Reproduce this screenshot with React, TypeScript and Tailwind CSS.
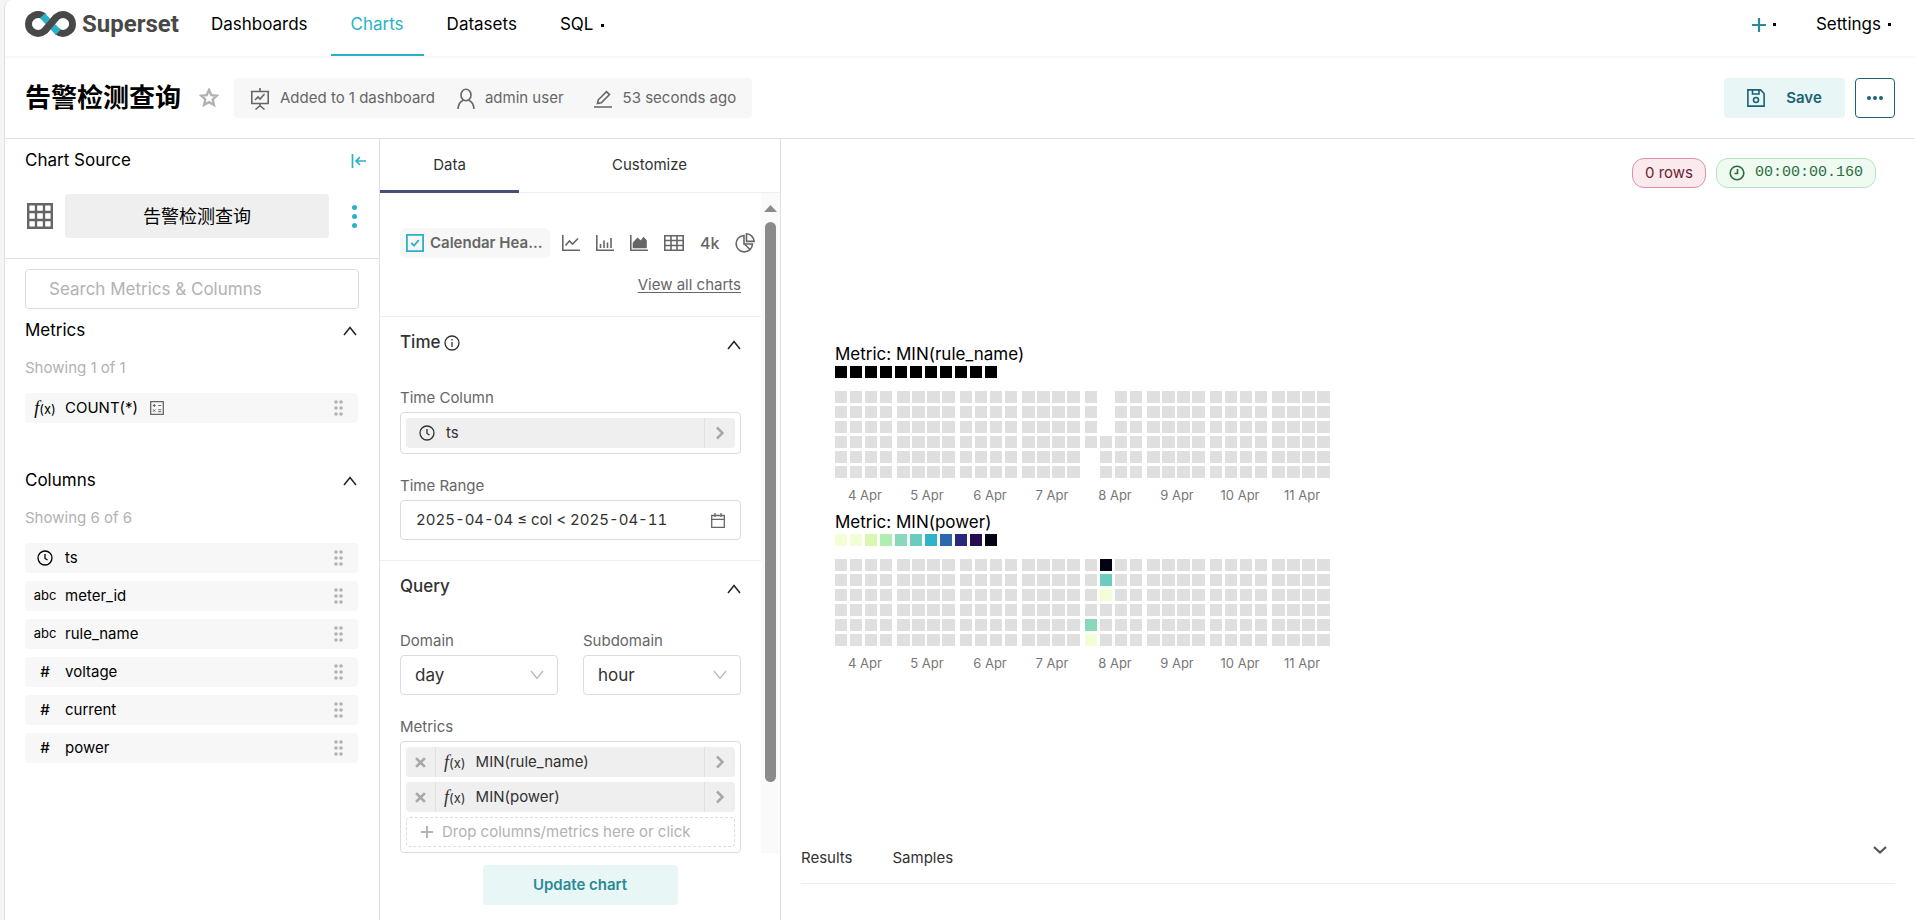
import React, {ReactNode, useState} from "react";

type IconProps = {className?: string};

const Logo = () => (
	<svg className="w-[51px] h-[26px]" viewBox="0 0 51 26" fill="none" strokeWidth="7">
		<path d="M31.500 20C38.500 25.500 47.500 20.500 47.500 13S38.500 0.500 31.500 6L19.500 20C12.500 25.500 3.500 20.500 3.500 13S12.500 0.500 19 5.600" stroke="#484848"/>
		<path d="M17.500 4.600L23.500 11.200M27.500 15.500L33.300 21.300" stroke="#2bb1c7"/>
		<path d="M19.500 20L31.500 6" stroke="#484848"/>
	</svg>
);

const Star = () => (
	<svg className="w-5 h-5" viewBox="0 0 20 20" fill="none" stroke="#b2b2b2" strokeWidth="2.400">
		<path d="M10 2l2.300 5.100 5.500.600-4.100 3.700 1.200 5.500L10 14.100l-4.900 2.800 1.200-5.500L2.200 7.700l5.500-.6z"/>
	</svg>
);

const Board = () => (
	<svg className="w-5 h-6" viewBox="0 0 20 24" fill="none" stroke="#666" strokeWidth="1.600">
		<path d="M.8 4.500h18.400M1.800 4.500v12h16.400v-12M10 1v3.500M10 16.500v3M5.500 22.500L10 18.700l4.500 3.800M5 13l3-3 2 2 4.500-5"/>
	</svg>
);

const Person = () => (
	<svg className="w-[18px] h-[22px]" viewBox="0 0 18 22" fill="none" stroke="#666" strokeWidth="1.6">
		<ellipse cx="9" cy="7" rx="5" ry="5.800"/>
		<path d="M1 21c.3-4.500 2-7.500 5.200-8.800M17 21c-.3-4.500-2-7.500-5.200-8.800"/>
	</svg>
);

const Pencil = () => (
	<svg className="w-[18px] h-[18px]" viewBox="0 0 18 18" fill="none" stroke="#666" strokeWidth="1.600">
		<path d="M0 17h18M3.500 13.500l.8-3.700L12.500 1.600l3 3-8.200 8.200z"/>
	</svg>
);

const Disk = () => (
	<svg className="w-[18px] h-[18px]" viewBox="0 0 18 18" fill="none" stroke="#1a6374" strokeWidth="1.6">
		<path d="M.9.900h12.600l3.600 3.600v12.600H.9zM5.500 1v4h6.500V1"/>
		<circle cx="9" cy="11" r="2.500"/>
	</svg>
);

const Collapse = () => (
	<svg className="w-4 h-4" viewBox="0 0 16 16" fill="none" stroke="#2bb1c7" strokeWidth="1.700">
		<path d="M1.500 1v14M15 8H5M9 4L5 8l4 4"/>
	</svg>
);

const TableIcon = () => (
	<svg className="w-[26px] h-[26px]" viewBox="0 0 26 26" fill="none" stroke="#666" strokeWidth="2.400">
		<path d="M1.200 1.200h23.600v23.600H1.200zM9 1v24M17 1v24M1 9h24M1 17h24"/>
	</svg>
);

const Clock = ({className}: IconProps) => (
	<svg className={className} viewBox="0 0 16 16" fill="none" stroke="currentColor" strokeWidth="1.300">
		<circle cx="8" cy="8" r="7"/>
		<path d="M8 4v4.500l2.500 1.500"/>
	</svg>
);

const Stopwatch = () => (
	<svg className="w-4 h-4" viewBox="0 0 16 16" fill="none" stroke="currentColor" strokeWidth="1.600">
		<circle cx="8" cy="8" r="6.800"/>
		<path d="M8.500 4v4.500H5.500"/>
	</svg>
);

const Info = () => (
	<svg className="w-4 h-4" viewBox="0 0 16 16" fill="none" stroke="#323232" strokeWidth="1.300">
		<circle cx="8" cy="8" r="7"/>
		<path d="M8 7v5M8 4v1.500"/>
	</svg>
);

const CaretUp = () => (
	<svg className="w-[14px] h-[10px]" viewBox="0 0 14 10" fill="none" stroke="#222" strokeWidth="1.5">
		<path d="M1 9l6-7.500L13 9"/>
	</svg>
);

const CaretDown = () => (
	<svg className="w-[14px] h-[10px]" viewBox="0 0 14 10" fill="none" stroke="#b8b8b8" strokeWidth="1.300">
		<path d="M1 1l6 7.500L13 1"/>
	</svg>
);

const Grip = () => (
	<svg className="w-[10px] h-4" viewBox="0 0 10 16" fill="#b2b2b2">
		{[2, 8, 14].map(y => <g key={y}><circle cx="2" cy={y} r="1.800"/><circle cx="7" cy={y} r="1.800"/></g>)}
	</svg>
);

const Calculator = () => (
	<svg className="w-[14px] h-[14px]" viewBox="0 0 14 14" fill="none" stroke="#666">
		<path d="M.7.700h12.600v12.600H.7z" strokeWidth="1.300"/>
		<path d="M2.800 4.500h3M4.300 3v3M8.200 4.500h3M8.200 8.700h3M8.200 10.700h3M3 8.300l2.500 2.500M5.500 8.300L3 10.800"/>
	</svg>
);

const Calendar = () => (
	<svg className="w-[14px] h-[15px]" viewBox="0 0 14 15" fill="none" stroke="#666" strokeWidth="1.300">
		<path d="M.7 2.500h12.600v11.800H.7zM.7 6.300h12.600M4 0v4M10 0v4"/>
	</svg>
);

const ArrowRight = () => (
	<svg className="w-2 h-3.5" viewBox="0 0 8 14" fill="none" stroke="#a8a8a8" strokeWidth="2.500">
		<path d="M1 1.500L6.500 7 1 12.500"/>
	</svg>
);

const Cross = () => (
	<svg className="w-[11px] h-[11px]" viewBox="0 0 10 10" fill="none" stroke="#a8a8a8" strokeWidth="2.400">
		<path d="M1 1l8 8M9 1L1 9"/>
	</svg>
);

const Plus = ({className}: IconProps) => (
	<svg className={className} viewBox="0 0 14 14" fill="none" stroke="currentColor" strokeWidth="2.200">
		<path d="M7 0v14M0 7h14"/>
	</svg>
);

const LineIcon = () => (
	<svg className="w-[18px] h-4" viewBox="0 0 18 16" fill="none" stroke="#666" strokeWidth="1.600">
		<path d="M.8 0v15.200H18M3.500 10.500l4-4.500 3 3L16 3.500"/>
	</svg>
);

const BarIcon = () => (
	<svg className="w-[18px] h-4" viewBox="0 0 18 16" fill="none" stroke="#666" strokeWidth="1.600">
		<path d="M.8 0v15.200H18M4.500 9v4M8 5.500V13M11.500 7.500V13M15 3v10"/>
	</svg>
);

const AreaIcon = () => (
	<svg className="w-[18px] h-4" viewBox="0 0 18 16" fill="none" stroke="#666" strokeWidth="1.600">
		<path d="M.8 0v15.200H18"/>
		<path d="M3.500 12.500V8l4-4.500 3.500 3L13.500 3 16 5.500v7z" fill="#666"/>
	</svg>
);

const GridIcon = () => (
	<svg className="w-5 h-4" viewBox="0 0 20 16" fill="none" stroke="#666" strokeWidth="1.600">
		<path d="M.8.800h18.400v14.400H.8zM7 1v14M13 1v14M1 5.500h18M1 10.500h18"/>
	</svg>
);

const PieIcon = () => (
	<svg className="w-5 h-5" viewBox="0 0 20 20" fill="none" stroke="#666" strokeWidth="1.600">
		<path d="M9 2.500a8.200 8.200 0 1 0 8.500 8.500H9z"/>
		<path d="M11.500.800a8 8 0 0 1 7.600 7.600h-7.600zM9.500 11l5.500 5.500"/>
	</svg>
);

const Checked = () => (
	<svg className="w-[18px] h-[18px] shrink-0" viewBox="0 0 18 18" fill="none" stroke="#2bb1c7" strokeWidth="1.800">
		<path d="M.9.900h16.200v16.200H.9z"/>
		<path d="M5.300 8.800l2.700 2.900L12.800 6"/>
	</svg>
);

const Fx = () => (
	<span className="text-[13px] whitespace-nowrap"><i className="font-['Liberation_Serif',serif] text-[18px]">f</i>(x)</span>
);

const Dot = () => <span className="w-[3px] h-[3px] bg-black"/>;

const NavLink = ({children, active}: {children: ReactNode; active?: boolean}) => (
	<a
		href="#"
		className={active
			? "h-14 pb-[14px] px-5 flex items-center text-[#2bb1c7] border-b-2 border-[#2bb1c7] pt-[10px]"
			: "h-14 pb-[14px] px-5 flex items-center gap-2 pt-2"}
	>
		{children}
	</a>
);

type Field = {name: string; type: "time" | "string" | "number" | "metric"};

const columns: Field[] = [
	{name: "ts", type: "time"},
	{name: "meter_id", type: "string"},
	{name: "rule_name", type: "string"},
	{name: "voltage", type: "number"},
	{name: "current", type: "number"},
	{name: "power", type: "number"},
];

const FieldRow = ({field}: {field: Field}) => (
	<li className="h-[30px] flex items-center bg-[#f7f7f7] rounded pr-[14px]">
		<span className="w-10 flex items-center justify-center shrink-0">
			{field.type === "metric" && <Fx/>}
			{field.type === "time" && <Clock className="w-4 h-4"/>}
			{field.type === "string" && <span className="text-[13px]">abc</span>}
			{field.type === "number" && <b className="text-[15px] font-medium">#</b>}
		</span>
		<span className="flex-1 flex items-center gap-3 text-[15px]">
			{field.name}
			{field.type === "metric" && <Calculator/>}
		</span>
		<Grip/>
	</li>
);

const FieldGroup = ({title, fields}: {title: string; fields: Field[]}) => (
	<section>
		<h3 className="h-[22px] pr-[2px] flex items-center justify-between text-[17px]">
			{title}
			<button type="button" aria-label={`Collapse ${title}`}><CaretUp/></button>
		</h3>
		<p className="mt-[14px] h-6 leading-6 text-[15px] text-[#b2b2b2]">Showing {fields.length} of {fields.length}</p>
		<ul className="mt-[13px] mr-px flex flex-col gap-2">
			{fields.map(field => <FieldRow key={field.name} field={field}/>)}
		</ul>
	</section>
);

const SectionTitle = ({children}: {children: ReactNode}) => (
	<h3 className="h-[22px] flex items-center justify-between text-[17px] font-medium text-[#323232]">
		<span className="flex items-center gap-1">{children}</span>
		<button type="button" aria-label="Collapse section" className="pt-1"><CaretUp/></button>
	</h3>
);

const MetricPill = ({name}: {name: string}) => (
	<div className="h-[30px] flex items-stretch bg-[#efefef] rounded">
		<button type="button" aria-label={`Remove ${name}`} className="w-[30px] flex items-center justify-center border-r border-[#e0e0e0]"><Cross/></button>
		<span className="flex-1 flex items-center gap-[10px] pl-2 text-[15px] text-[#323232]"><Fx/>{name}</span>
		<button type="button" aria-label={`Edit ${name}`} className="w-[31px] flex items-center justify-center border-l border-[#e0e0e0]"><ArrowRight/></button>
	</div>
);

const days = ["4 Apr", "5 Apr", "6 Apr", "7 Apr", "8 Apr", "9 Apr", "10 Apr", "11 Apr"];
const black = Array<string>(11).fill("#000");
const ramp = ["#f2fed6", "#f2fed6", "#d9f7ae", "#aeeeb3", "#8ad8bc", "#6accbd", "#2fb3c8", "#2a69aa", "#2b277f", "#240c51", "#030212"];

type HeatmapProps = {metric: string; legend: string[]; cells: Record<string, string>};

// cells is keyed by "day-column-row", everything else is an empty hour
const Heatmap = ({metric, legend, cells}: HeatmapProps) => (
	<figure>
		<figcaption className="h-6 leading-6 text-[17px]">Metric: {metric}</figcaption>
		<svg className="w-[496px] h-[140px]" viewBox="0 0 496 140" shapeRendering="crispEdges">
			{legend.map((color, i) => <rect key={i} x={i * 15} y="0" width="12" height="12" fill={color}/>)}
			{days.map((day, d) => {
				const left = Math.floor(d * 62.5);
				return (
					<g key={day}>
						{Array.from({length: 24}, (_, hour) => {
							const col = Math.floor(hour / 6);
							const row = hour % 6;
							return (
								<rect
									key={hour}
									x={left + col * 15}
									y={25 + row * 15}
									width={d % 2 ? 13 : 12}
									height="12"
									fill={cells[`${d}-${col}-${row}`] ?? "#dfdfdf"}
								/>
							);
						})}
						<text x={left + 30} y="134" textAnchor="middle" fontSize="13" fill="#777">{day}</text>
					</g>
				);
			})}
		</svg>
	</figure>
);

const App = () => {
	const [search, setSearch] = useState<string>("");
	const [domain, setDomain] = useState<string>("day");
	const [subdomain, setSubdomain] = useState<string>("hour");

	return (
		<div className="min-h-screen bg-[#f5f5f5] pl-1 flex font-['Inter','Noto_Sans_CJK_SC',sans-serif] text-black">
			<div className="flex-1 min-w-0 flex flex-col bg-white border-l border-[#e0e0e0] rounded-tl-lg">
				<header className="h-[58px] flex items-start justify-between border-b-2 border-[#f7f7f7] pl-5 text-[17px]">
					<div className="flex">
						<a href="#" className="h-12 flex items-center gap-[6px] mr-3">
							<Logo/>
							<span className="font-['Roboto',sans-serif] font-bold text-[24px] text-[#484848]">Superset</span>
						</a>
						<nav className="flex gap-[3px]">
							<NavLink>Dashboards</NavLink>
							<NavLink active>Charts</NavLink>
							<NavLink>Datasets</NavLink>
							<NavLink>SQL <Dot/></NavLink>
						</nav>
					</div>
					<div className="h-12 pt-px flex items-center gap-10 pr-6">
						<button type="button" aria-label="New" className="flex items-center gap-[7px] text-[#2a8a96]"><Plus className="w-[14px] h-[14px]"/><Dot/></button>
						<button type="button" className="flex items-center gap-[7px]">Settings <Dot/></button>
					</div>
				</header>

				<div className="h-[81px] flex items-center justify-between border-b border-[#e0e0e0] px-5">
					<div className="flex items-center">
						<h1 className="text-[26px] leading-8 font-bold">告警检测查询</h1>
						<button type="button" aria-label="Favorite" className="ml-[18px] mr-[15px]"><Star/></button>
						<ul className="h-10 pt-px flex items-center bg-[#f7f7f7] rounded px-4 text-[15px] text-[#666] gap-[22px]">
							<li className="flex items-center gap-[10px]"><Board/>Added to 1 dashboard</li>
							<li className="flex items-center gap-[10px]"><Person/>admin user</li>
							<li className="flex items-center gap-[11px] pl-2"><Pencil/>53 seconds ago</li>
						</ul>
					</div>
					<div className="flex gap-[10px]">
						<button type="button" className="h-10 w-[121px] rounded bg-[#e9f6f6] flex items-center justify-center gap-[21px] text-[15px] font-semibold text-[#1a6374]"><Disk/>Save</button>
						<button type="button" aria-label="More" className="h-10 w-10 rounded border border-[#1a6374] flex items-center justify-center gap-[2px]">
							<span className="w-1 h-1 rounded-full bg-[#1a6374]"/>
							<span className="w-1 h-1 rounded-full bg-[#1a6374]"/>
							<span className="w-1 h-1 rounded-full bg-[#1a6374]"/>
						</button>
					</div>
				</div>

				<main className="flex-1 flex items-stretch">
					<aside className="w-[375px] shrink-0 border-r border-[#e0e0e0]">
						<div className="px-5 pt-3 pb-5 border-b border-[#e0e0e0]">
							<div className="h-5 flex items-center justify-between text-[17px] -mr-2">
								<h2>Chart Source</h2>
								<button type="button" aria-label="Collapse panel"><Collapse/></button>
							</div>
							<div className="mt-[23px] flex items-center">
								<span className="w-10 pl-[2px]"><TableIcon/></span>
								<button type="button" className="flex-1 h-11 rounded bg-[#efefef] text-[18px]">告警检测查询</button>
								<button type="button" aria-label="Dataset actions" className="w-[30px] flex flex-col items-end gap-1 pr-[2px]">
									<span className="w-[5px] h-[5px] rounded-full bg-[#2bb1c7]"/>
									<span className="w-[5px] h-[5px] rounded-full bg-[#2bb1c7]"/>
									<span className="w-[5px] h-[5px] rounded-full bg-[#2bb1c7]"/>
								</button>
							</div>
						</div>
						<div className="px-5 pt-[10px]">
							<input
								type="text"
								aria-label="Search Metrics & Columns"
								placeholder="Search Metrics & Columns"
								value={search}
								onChange={event => setSearch(event.target.value)}
								className="w-full h-10 border border-[#dcdcdc] rounded px-[23px] text-[17px] placeholder-[#b2b2b2] mb-[11px]"
							/>
							<div className="flex flex-col gap-[47px]">
								<FieldGroup title="Metrics" fields={[{name: "COUNT(*)", type: "metric"}]}/>
								<FieldGroup title="Columns" fields={columns}/>
							</div>
						</div>
					</aside>

					<section className="w-[401px] shrink-0 border-r border-[#e0e0e0] flex flex-col">
						<div role="tablist" className="h-[54px] flex border-b border-[#efefef] text-[15px] text-[#323232]">
							<button type="button" role="tab" aria-selected="true" className="w-[139px] h-[54px] pt-[2px] border-b-[3px] border-[#484c7a]">Data</button>
							<button type="button" role="tab" aria-selected="false" className="flex-1">Customize</button>
						</div>
						<div className="flex">
							<div className="flex-1 min-w-0">
								<div className="px-5 pt-[35px] pb-[19px] border-b border-[#efefef]">
									<div className="h-[30px] -mr-4 flex items-center gap-4">
										<button type="button" className="h-[30px] w-[150px] shrink-0 -mr-1 px-[6px] flex items-center gap-[6px] rounded-md bg-[#f7f7f7] text-[15px] font-semibold text-[#666] whitespace-nowrap">
											<Checked/>Calendar Hea...
										</button>
										<button type="button" aria-label="Line chart"><LineIcon/></button>
										<button type="button" aria-label="Bar chart"><BarIcon/></button>
										<button type="button" aria-label="Area chart"><AreaIcon/></button>
										<button type="button" aria-label="Table"><GridIcon/></button>
										<button type="button" className="text-[16px] font-medium text-[#666]">4k</button>
										<button type="button" aria-label="Pie chart"><PieIcon/></button>
									</div>
									<p className="mt-[15px] h-6 leading-6 text-right text-[15px]"><a href="#" className="text-[#666] underline underline-offset-2">View all charts</a></p>
								</div>

								<div className="px-5 pt-[15px] pb-5 border-b border-[#efefef]">
									<SectionTitle>Time <Info/></SectionTitle>
									<p className="mt-[34px] mb-1 h-5 leading-5 text-[15px] text-[#666]">Time Column</p>
									<div className="p-[5px] border border-[#dcdcdc] rounded">
										<div className="h-[30px] flex items-stretch bg-[#efefef] rounded">
											<span className="flex-1 flex items-center gap-[11px] pl-[13px] text-[15px] text-[#323232]"><Clock className="w-4 h-4"/>ts</span>
											<button type="button" aria-label="Edit ts" className="w-[31px] flex items-center justify-center border-l border-[#e0e0e0]"><ArrowRight/></button>
										</div>
									</div>
									<p className="mt-[22px] mb-1 h-5 leading-5 text-[15px] text-[#666]">Time Range</p>
									<button type="button" className="w-full h-10 px-[15px] flex items-center justify-between border border-[#dcdcdc] rounded text-[15px] tabular-nums text-[#323232]">
										2025-04-04 ≤ col &lt; 2025-04-11
										<Calendar/>
									</button>
								</div>

								<div className="px-5 pt-[15px]">
									<SectionTitle>Query</SectionTitle>
									<div className="mt-[33px] grid grid-cols-2 gap-[25px]">
										<label className="text-[15px] leading-5 text-[#666]">
											Domain
											<span className="mt-1 grid items-center">
												<select value={domain} onChange={event => setDomain(event.target.value)} className="col-start-1 row-start-1 appearance-none h-10 border border-[#dcdcdc] rounded px-[14px] text-[17px] text-[#323232]">
													<option>day</option>
													<option>week</option>
												</select>
												<span className="col-start-1 row-start-1 justify-self-end pr-[14px] pointer-events-none"><CaretDown/></span>
											</span>
										</label>
										<label className="text-[15px] leading-5 text-[#666]">
											Subdomain
											<span className="mt-1 grid items-center">
												<select value={subdomain} onChange={event => setSubdomain(event.target.value)} className="col-start-1 row-start-1 appearance-none h-10 border border-[#dcdcdc] rounded px-[14px] text-[17px] text-[#323232]">
													<option>hour</option>
													<option>min</option>
												</select>
												<span className="col-start-1 row-start-1 justify-self-end pr-[14px] pointer-events-none"><CaretDown/></span>
											</span>
										</label>
									</div>
									<p className="mt-[22px] mb-1 h-5 leading-5 text-[15px] text-[#666]">Metrics</p>
									<div className="p-[5px] border border-[#dcdcdc] rounded flex flex-col gap-[5px]">
										<MetricPill name="MIN(rule_name)"/>
										<MetricPill name="MIN(power)"/>
										<button type="button" className="h-[30px] pl-[14px] flex items-center gap-[9px] border border-dashed border-[#dcdcdc] rounded text-[15px] text-[#b2b2b2]"><Plus className="w-3 h-3"/>Drop columns/metrics here or click</button>
									</div>
								</div>
							</div>
							<div className="w-[19px] bg-[#fafafa] flex flex-col items-center pt-3">
								<svg className="w-[13px] h-[7px]" viewBox="0 0 13 7" fill="#8b8b8b"><path d="M6.500 0L13 7H0z"/></svg>
								<div className="mt-[10px] w-[11px] h-[560px] rounded-full bg-[#8b8b8b]"/>
							</div>
						</div>
						<div className="pt-3 pb-3 flex justify-center">
							<button type="button" className="h-10 w-[195px] rounded bg-[#e9f6f6] text-[15px] font-semibold text-[#2a8a96]">Update chart</button>
						</div>
					</section>

					<section className="flex-1 min-w-0 px-5 flex flex-col">
						<div className="pt-[19px] pr-[19px] flex justify-end gap-[10px]">
							<span className="h-[30px] px-3 flex items-center rounded-xl border border-[#e08fa6] bg-[#faeaed] text-[15px] text-[#6b1e33]">0 rows</span>
							<span className="h-[30px] px-3 flex items-center gap-[10px] rounded-xl border border-[#b5e3c2] bg-[#effaf1] text-[15px] text-[#2b6b3e] font-['Liberation_Mono',monospace]"><Stopwatch/>00:00:00.160</span>
						</div>
						<div className="mt-[154px] pl-[34px] flex flex-col gap-1">
							<Heatmap
								metric="MIN(rule_name)"
								legend={black}
								cells={{"4-0-4": "#fff", "4-0-5": "#fff", "4-1-0": "#fff", "4-1-1": "#fff", "4-1-2": "#fff"}}
							/>
							<Heatmap
								metric="MIN(power)"
								legend={ramp}
								cells={{"4-0-4": ramp[4], "4-0-5": ramp[0], "4-1-0": ramp[10], "4-1-1": ramp[5], "4-1-2": ramp[0]}}
							/>
						</div>
						<div className="mt-auto mb-9 flex items-start justify-between border-b border-[#efefef]">
							<div role="tablist" className="h-[50px] flex items-center gap-10 text-[15px] text-[#323232]">
								<button type="button" role="tab">Results</button>
								<button type="button" role="tab">Samples</button>
							</div>
							<button type="button" aria-label="Expand results" className="pt-[13px] pr-2">
								<svg className="w-[14px] h-2" viewBox="0 0 14 8" fill="none" stroke="#555" strokeWidth="2.200"><path d="M1 1l6 5.500L13 1"/></svg>
							</button>
						</div>
					</section>
				</main>
			</div>
		</div>
	);
};

export default App;
